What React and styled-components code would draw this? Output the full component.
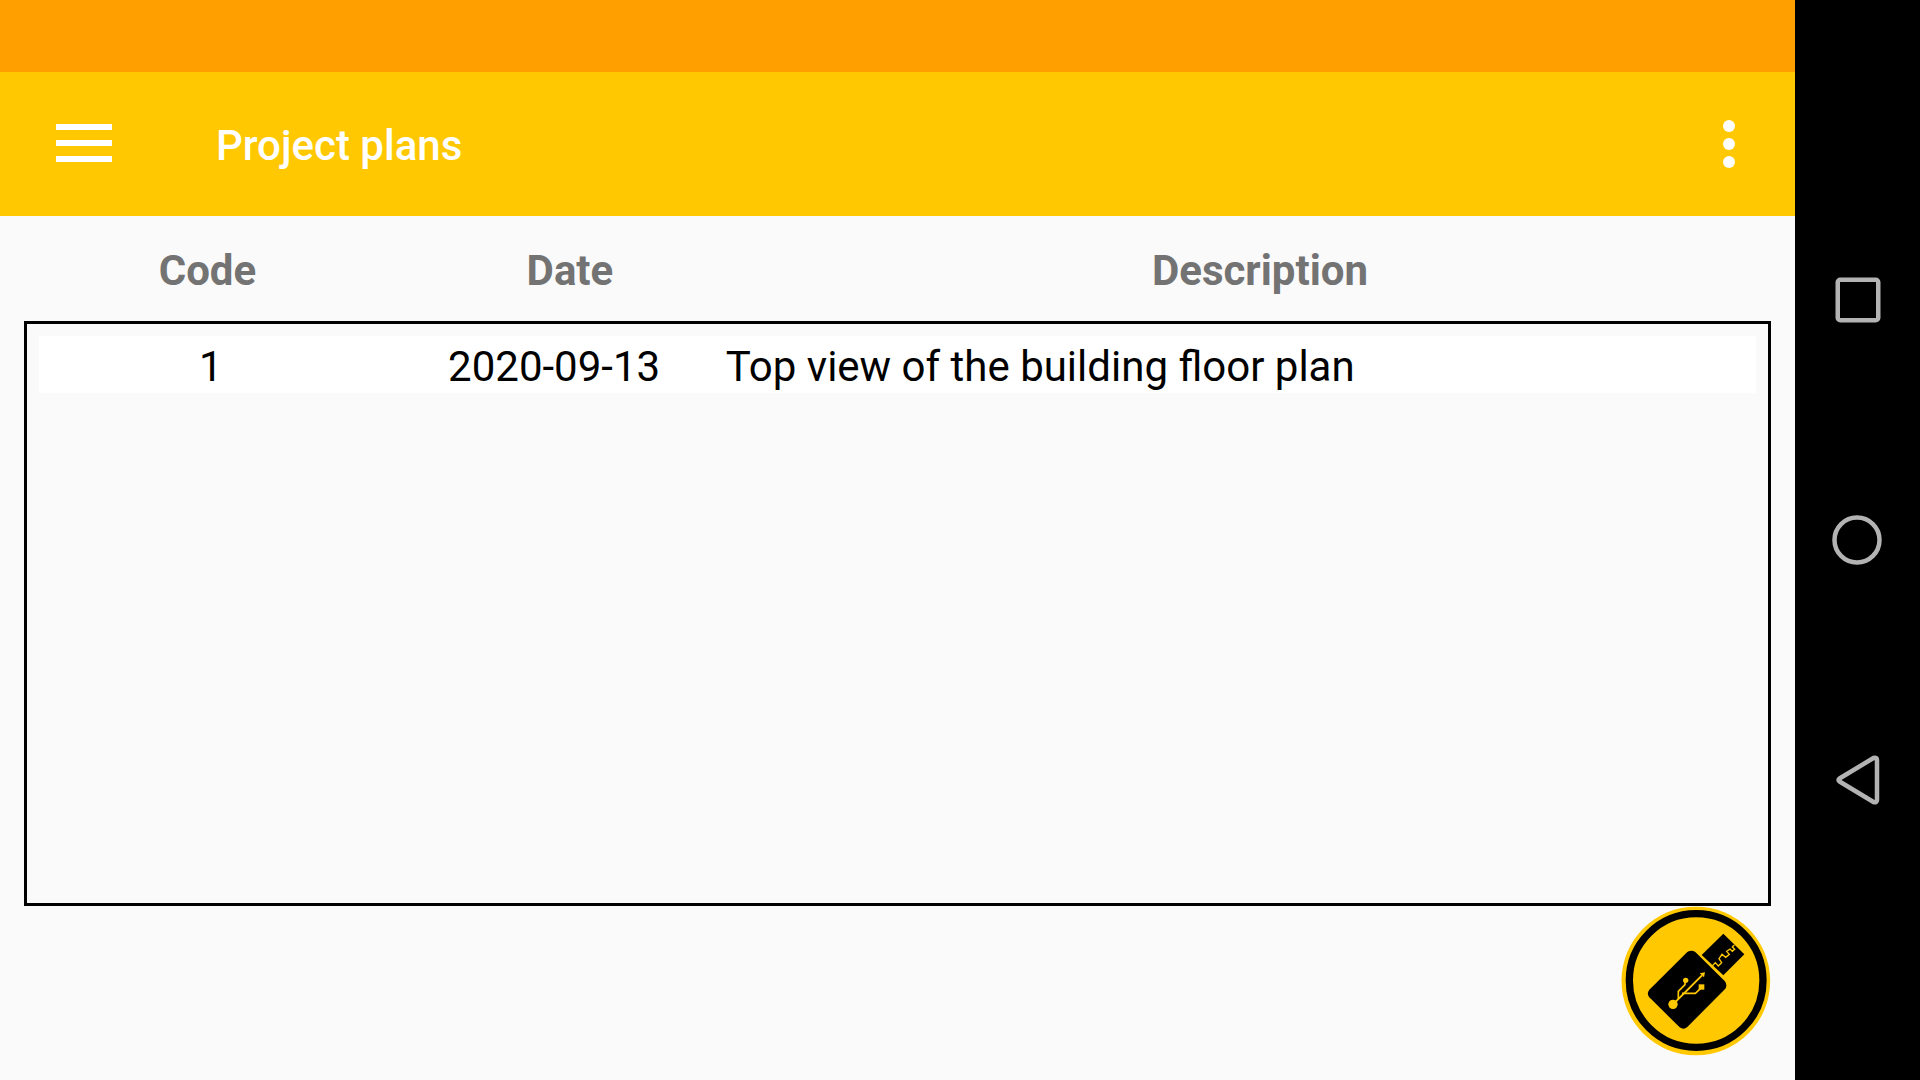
import React from "react";
import styled, { createGlobalStyle } from "styled-components";

const GlobalStyle = createGlobalStyle`
  *, *::before, *::after { box-sizing: border-box; }
  body {
    margin: 0;
    background: #fafafa;
    font-family: Roboto, "Noto Sans", sans-serif;
  }
`;

const Screen = styled.div`
  display: flex;
  min-height: 100vh;
`;

const Main = styled.main`
  flex: 1;
  min-width: 0;
  display: flex;
  flex-direction: column;
`;

const StatusBar = styled.div`
  height: 72px;
  background: #ffa000;
`;

const Toolbar = styled.header`
  display: flex;
  align-items: center;
  height: 144px;
  padding: 0 36px;
  background: #ffc800;
  color: #fff;
`;

const IconButton = styled.button`
  display: flex;
  align-items: center;
  justify-content: center;
  width: ${(p) => p.$width}px;
  height: 96px;
  padding: 0;
  border: 0;
  background: none;
  color: inherit;
  cursor: pointer;
`;

const Title = styled.h1`
  flex: 1;
  margin: 0;
  padding: 4px 0 0 84px;
  font-size: 42px;
  font-weight: 500;
  line-height: 56px;
`;

const PlansTable = styled.table`
  flex: 1;
  display: flex;
  flex-direction: column;
  margin: 0 24px;
`;

const TableHead = styled.thead`
  display: block;
`;

const TableBody = styled.tbody`
  flex: 1;
  display: block;
  padding: 12px;
  border: 3px solid #000;
`;

const HeadRow = styled.tr`
  display: grid;
  grid-template-columns: 42fr 41fr 117fr;
  align-items: center;
  height: 105px;
`;

const HeadCell = styled.th`
  padding: 4px 0 0;
  color: #737373;
  font-size: 42px;
  font-weight: 700;
  line-height: 56px;
  text-align: center;
`;

const Row = styled.tr`
  display: grid;
  grid-template-columns: 1fr 1fr 3fr;
  background: #fff;
`;

const Cell = styled.td`
  padding: 5px 0 0;
  color: #000;
  font-size: 42px;
  line-height: 52px;
  text-align: ${(p) => (p.$start ? "left" : "center")};
`;

const Actions = styled.div`
  display: flex;
  justify-content: flex-end;
  padding: 0 24px 24px;
`;

const UsbButton = styled.button`
  width: 150px;
  height: 150px;
  padding: 0;
  border: 0;
  border-radius: 50%;
  background: none;
  cursor: pointer;

  svg { display: block; }
`;

const SystemNav = styled.nav`
  display: flex;
  flex-direction: column;
  justify-content: center;
  width: 125px;
  background: #000;
  color: #b3b3b3;
`;

const NavButton = styled.button`
  display: flex;
  align-items: center;
  justify-content: center;
  height: 240px;
  padding: 0;
  border: 0;
  background: none;
  color: inherit;
  cursor: pointer;
`;

const plans = [
  { code: "1", date: "2020-09-13", description: "Top view of the building floor plan" },
];

function MenuIcon() {
  return (
    <svg width="56" height="40" viewBox="0 0 56 40" fill="currentColor" aria-hidden="true">
      <path d="M0 0h56v6H0zM0 16h56v6H0zM0 32h56v6H0z" />
    </svg>
  );
}

function MoreIcon() {
  return (
    <svg width="12" height="48" viewBox="0 0 12 48" fill="currentColor" aria-hidden="true">
      <circle cx="6" cy="6" r="6" />
      <circle cx="6" cy="24" r="6" />
      <circle cx="6" cy="42" r="6" />
    </svg>
  );
}

function UsbIcon() {
  return (
    <svg width="150" height="150" viewBox="63 48 450 450" aria-hidden="true">
      <circle cx="287.500" cy="273" r="223" fill="#ffc800" />
      <circle cx="288.500" cy="271.500" r="200.500" fill="none" stroke="#000" strokeWidth="22" />
      <path d="M262 186Q274 178 286 186L374 273Q383 284 376 296L262 411Q251 421 239 412L148 322Q139 311 148 299Z" />
      <path d="M370 131L433 193L370 256L305 195Z" />
      <g fill="none" stroke="#ffc800" strokeWidth="4">
        <path d="M334 231L346 218L355 228L365 218L357 206L366 193L377 202L388 193L380 184L390 177L397 184L404 178L397 171L403 165" />
        <path d="M219 343L306 256" strokeWidth="6" />
        <path d="M235 327V304L255 284V271M246 310H286L301 296V291" strokeWidth="5" />
      </g>
      <g fill="#ffc800">
        <circle cx="219" cy="343" r="14" />
        <circle cx="257" cy="271" r="8" />
        <path d="M296 283H313V299H296Z" />
        <path d="M315 247L312 262L299 250Z" />
      </g>
    </svg>
  );
}

function SquareIcon() {
  return (
    <svg width="46" height="46" viewBox="0 0 46 46" fill="none" stroke="currentColor" strokeWidth="4.500" aria-hidden="true">
      <rect x="2.750" y="2.750" width="40.500" height="40.500" rx="2.500" />
    </svg>
  );
}

function CircleIcon() {
  return (
    <svg width="52" height="50" viewBox="0 0 52 50" fill="none" stroke="currentColor" strokeWidth="4.500" aria-hidden="true">
      <circle cx="25" cy="25" r="22.500" />
    </svg>
  );
}

function BackIcon() {
  return (
    <svg width="44" height="50" viewBox="0 0 44 50" fill="none" stroke="currentColor" strokeWidth="4.500" strokeLinejoin="round" aria-hidden="true">
      <path d="M3.500 23.500L37.500 3Q41 2 41 5V45Q41 48 37.500 47L3.500 26.500Q1.500 25 3.500 23.500Z" />
    </svg>
  );
}

export default function App() {
  return (
    <>
      <GlobalStyle />
      <Screen>
        <Main>
          <StatusBar />
          <Toolbar>
            <IconButton type="button" $width={96} aria-label="Open menu">
              <MenuIcon />
            </IconButton>
            <Title>Project plans</Title>
            <IconButton type="button" $width={60} aria-label="More options">
              <MoreIcon />
            </IconButton>
          </Toolbar>
          <PlansTable>
            <TableHead>
              <HeadRow>
                <HeadCell scope="col">Code</HeadCell>
                <HeadCell scope="col">Date</HeadCell>
                <HeadCell scope="col">Description</HeadCell>
              </HeadRow>
            </TableHead>
            <TableBody>
              {plans.map((plan) => (
                <Row key={plan.code}>
                  <Cell>{plan.code}</Cell>
                  <Cell>{plan.date}</Cell>
                  <Cell $start>{plan.description}</Cell>
                </Row>
              ))}
            </TableBody>
          </PlansTable>
          <Actions>
            <UsbButton type="button" aria-label="Load from USB">
              <UsbIcon />
            </UsbButton>
          </Actions>
        </Main>
        <SystemNav aria-label="System navigation">
          <NavButton type="button" aria-label="Recent apps"><SquareIcon /></NavButton>
          <NavButton type="button" aria-label="Home"><CircleIcon /></NavButton>
          <NavButton type="button" aria-label="Back"><BackIcon /></NavButton>
        </SystemNav>
      </Screen>
    </>
  );
}
